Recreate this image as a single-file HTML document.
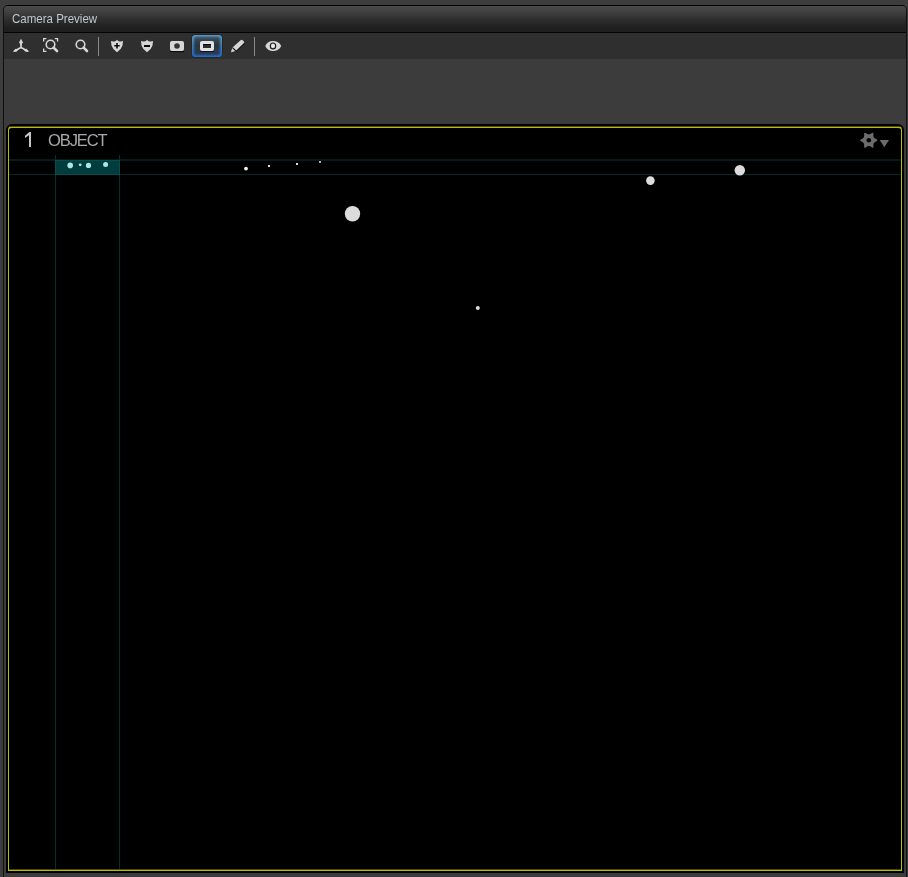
<!DOCTYPE html>
<html><head><meta charset="utf-8">
<style>
html,body{margin:0;padding:0}
body{width:908px;height:877px;background:#3d3d3d;overflow:hidden;position:relative;font-family:"Liberation Sans",sans-serif}
.abs{position:absolute}
#panel{left:3px;top:5px;width:902px;height:880px;border:1px solid #101010;border-top-color:#050505;border-bottom:none;border-radius:5px 5px 0 0;background:#3c3c3c;overflow:hidden}
#title{left:0;top:0;width:902px;height:26px;background:linear-gradient(#4b4b4b 0,#434343 18%,#2c2c2c 55%,#1f1f1f 85%,#1e1e1e 100%)}
#title span{position:absolute;left:8px;top:5px;font-size:12.8px;transform:scaleX(0.9);transform-origin:0 0;color:#bfc7ce;white-space:nowrap}
#tline{left:0;top:26px;width:902px;height:1px;background:#030303}
#toolbar{left:0;top:27px;width:902px;height:26px;background:#2f2f2f}
#vp{left:6px;top:124px;width:894px;height:745px;border:2px solid #000;border-radius:6px 6px 0 0;background:#000}
#yb{left:0px;top:0px;width:892px;height:741px;border:2px solid #bcbc00;border-left-width:1px;border-right-width:1px;border-radius:4px 4px 0 0;}
#num{left:23px;top:128px;font-size:21px;color:#d4d4d4}
#obj{will-change:transform;left:48px;top:131px;font-size:16.5px;color:#a8a8a8;letter-spacing:-1.1px}
</style></head><body>
<div id="panel" class="abs">
  <div id="title" class="abs"><span>Camera Preview</span></div>
  <div id="tline" class="abs"></div>
  <div id="toolbar" class="abs"></div>
</div>

<svg class="abs" style="left:0;top:0" width="908" height="70" viewBox="0 0 908 70">
  <g fill="#d6d6d6" stroke="none">
    <!-- axis -->
    <g stroke="#0c0c0c" stroke-opacity="0.6" stroke-width="1" fill="none" transform="translate(0,1)">
      <path d="M21 47.6 L14 51.3 M21 47.6 L28 51.3"/>
    </g>
    <path d="M21 47.6 L21 42" stroke="#d6d6d6" stroke-width="1.7"/>
    <path d="M21 38.8 L23 42.5 L21 45 L19 42.5 Z"/>
    <path d="M21 47.6 L14 51.2" stroke="#d6d6d6" stroke-width="1.7"/>
    <path d="M21 47.6 L28 51.2" stroke="#d6d6d6" stroke-width="1.7"/>
    <path d="M13 51.8 L15.6 48.7 L18.5 49.6 L16.5 51.8 Z"/>
    <path d="M29 51.8 L26.4 48.7 L23.5 49.6 L25.5 51.8 Z"/>
    <!-- zoom fit -->
    <path d="M43 38 h3.4 v1.3 h-2.1 v2.1 h-1.3 Z M58.2 38 h-3.4 v1.3 h2.1 v2.1 h1.3 Z M43 52 h3.4 v-1.3 h-2.1 v-2.1 h-1.3 Z"/>
    <circle cx="50.5" cy="44.5" r="4.3" fill="none" stroke="#d6d6d6" stroke-width="1.6"/>
    <path d="M53.6 47.6 L57 51" stroke="#d6d6d6" stroke-width="2.6" stroke-linecap="round"/>
    <!-- magnifier -->
    <circle cx="80.5" cy="44.5" r="4.3" fill="none" stroke="#d6d6d6" stroke-width="1.6"/>
    <path d="M83.6 47.6 L87 51" stroke="#d6d6d6" stroke-width="2.6" stroke-linecap="round"/>
    <!-- separator -->
    <rect x="98" y="37" width="1" height="19" fill="#8a8a8a"/>
    <!-- shield plus -->
    <path d="M111.0 41.1 Q113.0 41.9 114.6 41.4 Q116.3 40.8 117.0 39.7 Q117.7 40.8 119.4 41.4 Q121.0 41.9 123.0 41.1 L122.5 45.5 Q121.0 50 117.0 52.2 Q113.0 50 111.5 45.5 Z"/>
    <path d="M116.2 43 h1.6 v1.9 h1.9 v1.6 h-1.9 v1.9 h-1.6 v-1.9 h-1.9 v-1.6 h1.9 Z" fill="#0a0a0a"/>
    <!-- shield minus -->
    <path d="M141.0 41.1 Q143.0 41.9 144.6 41.4 Q146.3 40.8 147.0 39.7 Q147.7 40.8 149.4 41.4 Q151.0 41.9 153.0 41.1 L152.5 45.5 Q151.0 50 147.0 52.2 Q143.0 50 141.5 45.5 Z"/>
    <rect x="144" y="45" width="6" height="2" fill="#0a0a0a"/>
    <!-- camera -->
    <rect x="170" y="51" width="14" height="1.2" fill="#000" opacity="0.7"/>
    <rect x="170" y="41" width="14" height="10" rx="2"/>
    <circle cx="177" cy="46" r="2.8" fill="#333"/>
  </g>
  <!-- active button -->
  <defs>
    <linearGradient id="bb" x1="0" y1="0" x2="0" y2="1">
      <stop offset="0" stop-color="#5ca8da"/><stop offset="0.5" stop-color="#3f86c4"/><stop offset="1" stop-color="#1f6ee2"/>
    </linearGradient>
    <linearGradient id="bf" x1="0" y1="0" x2="0" y2="1">
      <stop offset="0" stop-color="#3c4e5e"/><stop offset="0.45" stop-color="#2c3640"/><stop offset="1" stop-color="#283a52"/>
    </linearGradient>
    <filter id="bl" x="-20%" y="-20%" width="140%" height="140%"><feGaussianBlur stdDeviation="0.9"/></filter>
    <clipPath id="bc"><rect x="192" y="35" width="30" height="22" rx="3.5"/></clipPath>
  </defs>
  <rect x="191.5" y="34.5" width="31" height="23" rx="4" fill="none" stroke="#2a241f" stroke-width="1"/>
  <g clip-path="url(#bc)">
    <rect x="192" y="35" width="30" height="22" fill="url(#bb)"/>
    <rect x="193.8" y="36.6" width="26.4" height="18.6" rx="2" fill="url(#bf)" filter="url(#bl)"/>
  </g>
  <rect x="200" y="51" width="14" height="1" fill="#000" opacity="0.6"/>
  <path fill-rule="evenodd" fill="#e2e2e2" d="M202 41 h10 a2 2 0 0 1 2 2 v6 a2 2 0 0 1 -2 2 h-10 a2 2 0 0 1 -2 -2 v-6 a2 2 0 0 1 2 -2 Z M203 44 v4 h8 v-4 Z"/>
  <rect x="203" y="44" width="8" height="4" fill="#2e2e2e"/>
  <rect x="203" y="44" width="8" height="1" fill="#0a0a0a"/>
  <!-- pencil -->
  <path d="M244.8 43.2 L236 51.8" stroke="#0a0a0a" stroke-width="1" opacity="0.8"/>
  <g fill="#d6d6d6">
    <path d="M240.6 40.2 Q241.6 39.3 242.6 40.2 L243.9 41.5 Q244.6 42.4 243.9 43 L235.6 51 L232.2 47.8 Z"/>
    <path d="M232.2 47.8 L235.6 51 L231 52.3 Z"/>
    <path d="M232.5 47.6 L235.8 50.8" stroke="#0d0d0d" stroke-width="1.1"/>
  </g>
  <rect x="254" y="37" width="1" height="19" fill="#8a8a8a"/>
  <!-- eye -->
  <path d="M265.3 46 C267 42 270.3 40.9 273 40.9 C275.7 40.9 279.5 42 281.2 46 C279.5 50 275.7 51 273 51 C270.3 51 267 50 265.3 46 Z" fill="#d8d8d8"/>
  <ellipse cx="273" cy="45.9" rx="2.7" ry="2.95" fill="none" stroke="#1c1c1c" stroke-width="1.15"/>
  <circle cx="273" cy="45.9" r="1.3" fill="#ececec"/>
</svg>
<div id="vp" class="abs"><div id="yb" class="abs"></div></div>
<div class="abs" style="left:10px;top:126px;width:890px;height:1px;background:rgba(0,0,0,0.6)"></div>
<div class="abs" style="left:9px;top:869px;width:892px;height:1px;background:rgba(0,0,0,0.6)"></div>
<div id="obj" class="abs">OBJECT</div>
<svg class="abs" style="left:0;top:0" width="908" height="877" viewBox="0 0 908 877">
  <!-- one -->
  <path fill="#c4c4c4" d="M29 132 H31 V147 H29 V135.2 L25 138 V135.8 L29.3 132 Z"/>
  <!-- grid -->
  <rect x="9" y="159" width="892" height="2" fill="#021c1c"/>
  <rect x="9" y="174" width="892" height="1" fill="#032828"/>
  <rect x="55" y="155" width="1" height="714" fill="#03302d"/>
  <rect x="119" y="155" width="1" height="714" fill="#03302d"/>
  <rect x="55" y="160" width="65" height="15" fill="#064e4e"/>
  <rect x="56" y="161" width="63" height="13" fill="#033c3c"/>
  <g fill="#a6e8e8">
    <circle cx="70.2" cy="165.4" r="2.8"/>
    <circle cx="80.2" cy="164.8" r="1.4"/>
    <circle cx="88.5" cy="165.4" r="2.6"/>
    <circle cx="105.6" cy="164.4" r="2.5"/>
  </g>
  <g fill="#dcdcdc">
    <circle cx="246" cy="168.6" r="1.9" fill="#f2f2f2"/>
    <rect x="268" y="165" width="2" height="2"/>
    <rect x="296" y="163" width="2" height="2"/>
    <rect x="319" y="161" width="2" height="2" fill="#b0b0b0"/>
    <circle cx="352.5" cy="213.8" r="7.7"/>
    <circle cx="477.8" cy="307.9" r="2"/>
    <circle cx="650.4" cy="180.6" r="4.3"/>
    <circle cx="739.8" cy="170.3" r="5.2"/>
  </g>
  <!-- gear -->
  <path d="M876.30 140.30 Q871.40 141.80 872.55 146.80 Q868.80 143.30 865.05 146.80 Q866.20 141.80 861.30 140.30 Q866.20 138.80 865.05 133.80 Q868.80 137.30 872.55 133.80 Q871.40 138.80 876.30 140.30 Z" fill="#6c6c6c" stroke="#6c6c6c" stroke-width="2" stroke-linejoin="round"/>
  <circle cx="868.8" cy="140.3" r="2.3" fill="#000"/>
  <path d="M879.7 140 L889 140 L884.3 147.2 Z" fill="#6c6c6c"/>
</svg>
</body></html>
